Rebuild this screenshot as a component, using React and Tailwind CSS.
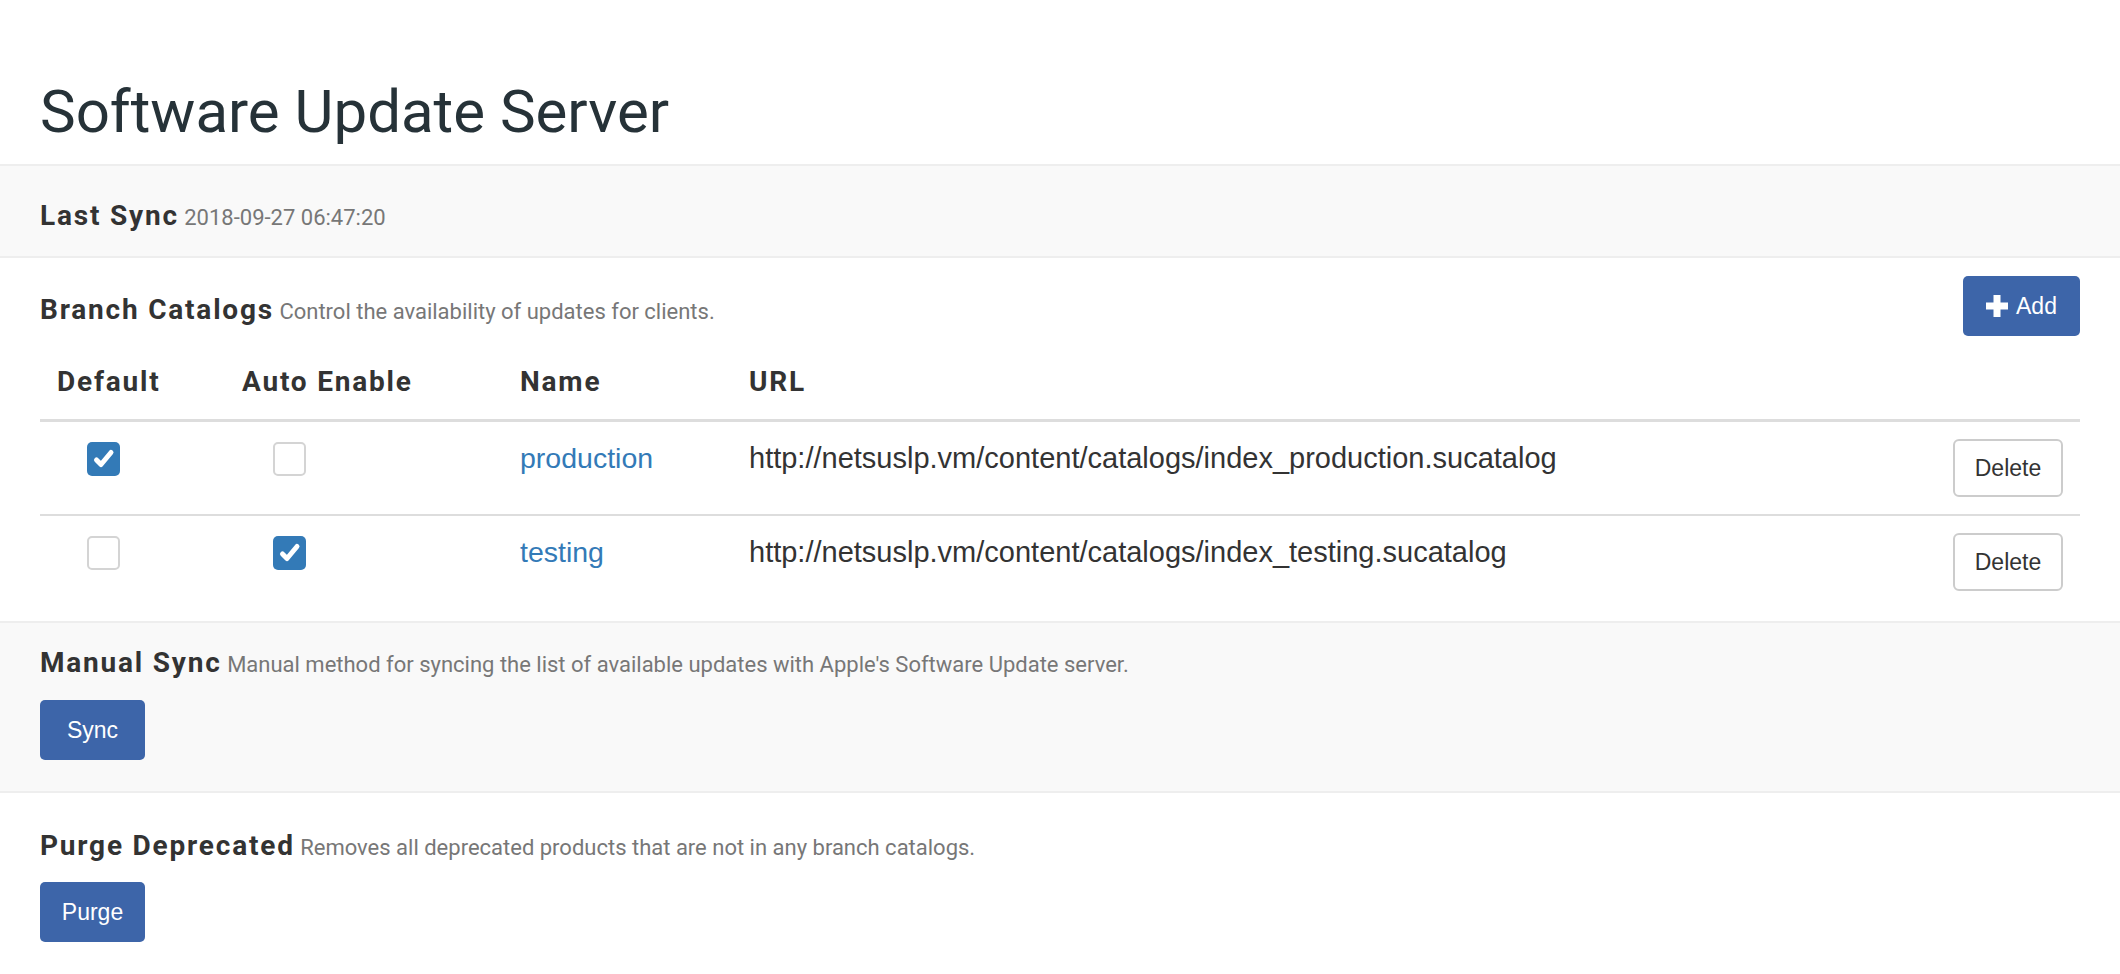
import React from "react";

const catalogs = [
  {
    name: "production",
    url: "http://netsuslp.vm/content/catalogs/index_production.sucatalog",
    isDefault: true,
    autoEnable: false,
  },
  {
    name: "testing",
    url: "http://netsuslp.vm/content/catalogs/index_testing.sucatalog",
    isDefault: false,
    autoEnable: true,
  },
];

const Checkbox = ({ checked }) =>
  checked ? (
    <div className="w-[33px] h-[34px] rounded-[5px] bg-[#337ab7] flex items-center justify-center">
      <svg width="33" height="34" viewBox="0 0 33 34">
        <path
          d="M9.5 18 L14 22.5 L24 10.5"
          fill="none"
          stroke="#fff"
          strokeWidth="5"
          strokeLinecap="round"
          strokeLinejoin="round"
        />
      </svg>
    </div>
  ) : (
    <div className="w-[33px] h-[34px] rounded-[5px] bg-white border-2 border-[#d4d4d4]" />
  );

const PlusIcon = () => (
  <svg width="22" height="22" viewBox="0 0 22 22">
    <path d="M7.5 0h7v7.5h7.5v7h-7.5v7.5h-7v-7.5h-7.5v-7h7.5z" fill="#fff" />
  </svg>
);

const BlueButton = ({ children, className = "" }) => (
  <button
    className={`h-[60px] rounded-[5px] bg-[#3d65a9] text-white text-[23px] font-['Liberation_Sans',Arial,sans-serif] flex items-center justify-center ${className}`}
  >
    {children}
  </button>
);

const Heading = ({ title, note }) => (
  <h2 className="text-[28px] font-bold tracking-[1.8px] leading-[32px] text-[#333]">
    {title}
    <span className="text-[22px] font-normal tracking-normal leading-none text-[#777]">
      {" "}
      {note}
    </span>
  </h2>
);

const cols = "grid grid-cols-[185px_278px_229px_1fr_144px]";

export default function App() {
  return (
    <div className="min-h-screen bg-white font-['Roboto',sans-serif]">
      <header className="px-10 pt-[79px] pb-[19px]">
        <h1 className="text-[60px] leading-[66px] text-[#263238]">Software Update Server</h1>
      </header>

      {/* last sync */}
      <section className="border-y-2 border-[#eee] bg-[#f9f9f9] px-10 pt-[34px] pb-[24px]">
        <Heading title="Last Sync" note="2018-09-27 06:47:20" />
      </section>

      {/* branch catalogs */}
      <section className="px-10 pt-[18px] pb-[13px]">
        <div className="flex items-start justify-between">
          <div className="mt-[18px]">
            <Heading title="Branch Catalogs" note="Control the availability of updates for clients." />
          </div>
          <BlueButton className="w-[117px] gap-[8px]">
            <PlusIcon />
            <span>Add</span>
          </BlueButton>
        </div>

        <div className={`${cols} pt-[30px] pb-[21px] border-b-[3px] border-[#ddd] text-[28px] font-bold tracking-[1.8px] leading-[32px] text-[#333]`}>
          <div className="px-[17px]">Default</div>
          <div className="px-[17px]">Auto Enable</div>
          <div className="px-[17px]">Name</div>
          <div className="px-[17px]">URL</div>
          <div />
        </div>

        {catalogs.map((c, i) => (
          <div
            key={c.name}
            className={`${cols} items-start pt-[17px] pb-[17px] ${i === 0 ? "border-b-2 border-[#ddd]" : ""}`}
          >
            <div className="px-[17px] pt-[3px] pl-[47px]">
              <Checkbox checked={c.isDefault} />
            </div>
            <div className="px-[17px] pt-[3px] pl-[48px]">
              <Checkbox checked={c.autoEnable} />
            </div>
            <div className="px-[17px] font-['Liberation_Sans',Arial,sans-serif] text-[28.5px] leading-[38px]">
              <a href="#" className="text-[#337ab7]">
                {c.name}
              </a>
            </div>
            <div className="px-[17px] font-['Liberation_Sans',Arial,sans-serif] text-[29px] leading-[38px] text-[#333] whitespace-nowrap">
              {c.url}
            </div>
            <div className="px-[17px]">
              <button className="w-[110px] h-[58px] rounded-[6px] border-2 border-[#ccc] bg-white text-[23px] text-[#333] font-['Liberation_Sans',Arial,sans-serif]">
                Delete
              </button>
            </div>
          </div>
        ))}
      </section>

      {/* manual sync */}
      <section className="border-y-2 border-[#eee] bg-[#f9f9f9] px-10 pt-[24px] pb-[31px]">
        <Heading
          title="Manual Sync"
          note="Manual method for syncing the list of available updates with Apple's Software Update server."
        />
        <BlueButton className="w-[105px] mt-[21px]">Sync</BlueButton>
      </section>

      {/* purge */}
      <section className="px-10 pt-[37px] pb-[32px]">
        <Heading
          title="Purge Deprecated"
          note="Removes all deprecated products that are not in any branch catalogs."
        />
        <BlueButton className="w-[105px] mt-[20px]">Purge</BlueButton>
      </section>
    </div>
  );
}
